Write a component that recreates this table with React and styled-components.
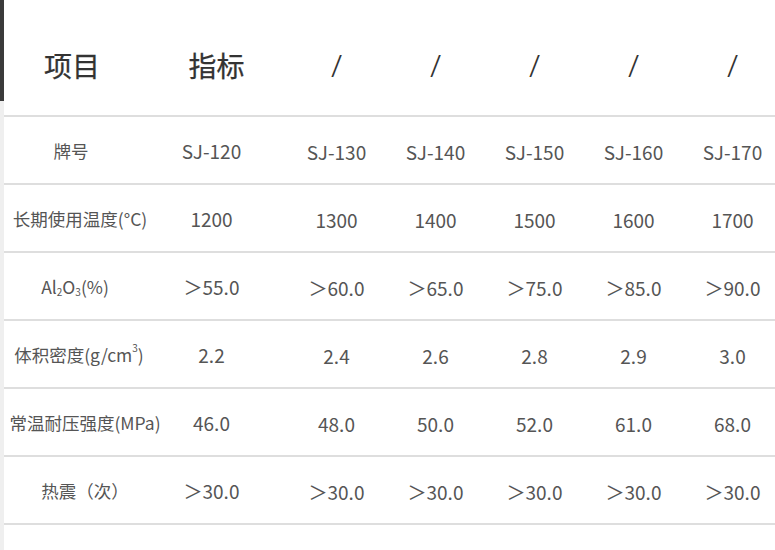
import React from 'react'
import styled, { createGlobalStyle } from 'styled-components'

const GlobalStyle = createGlobalStyle`
  html, body {
    margin: 0;
    padding: 0;
    background: #fff;
    overflow: hidden;
  }
  body {
    font-family: "Noto Sans CJK SC", "Noto Sans", sans-serif;
  }
`

const Frame = styled.div`
  display: flex;
  width: 775px;
  height: 550px;
  overflow: hidden;
`
const Rail = styled.div`
  flex: 0 0 4px;
  background: linear-gradient(#3a3a3a 0 101px, #efefef 101px);
`
const Table = styled.div`
  display: grid;
  grid-template-columns: 152px 131px repeat(5, 99px);
  grid-template-rows: 117px;
  grid-auto-rows: 68px;
  flex: 0 0 auto;
`
const Cell = styled.div`
  display: flex;
  align-items: center;
  justify-content: center;
  box-sizing: border-box;
  border-bottom: 2px solid #dedede;
  color: #555;
  font-size: ${p => (p.$label ? '17.5px' : '19px')};
  white-space: nowrap;
  padding-top: ${p => p.$top || 0}px;
  padding-left: ${p => Math.max(p.$shift || 0, 0) * 2}px;
  padding-right: ${p => Math.max(-(p.$shift || 0), 0) * 2}px;
`
const HeadCell = styled(Cell)`
  color: #333;
  font-size: 28px;
  font-weight: 400;
  -webkit-text-stroke: 0.25px #333;
  padding-top: 14px;
`
const Slash = styled.span`
  font-family: "Noto Sans", sans-serif;
  font-weight: 300;
  font-size: 32px;
  color: #333;
  -webkit-text-stroke: 0;
`
const Sub = styled.span`
  font-size: 10px;
  position: relative;
  top: ${p => (p.$up ? '-7px' : '5px')};
`

const head = ['项目', '指标', '/', '/', '/', '/', '/']
const headShift = [-8, -5, 0, 0, 0, 0, 0]

const rows = [
  { label: '牌号', shift: -9, values: ['SJ-120', 'SJ-130', 'SJ-140', 'SJ-150', 'SJ-160', 'SJ-170'] },
  { label: '长期使用温度(°C)', shift: 0, values: ['1200', '1300', '1400', '1500', '1600', '1700'] },
  {
    label: <>Al<Sub>2</Sub>O<Sub>3</Sub>(%)</>,
    shift: -5,
    values: ['＞55.0', '＞60.0', '＞65.0', '＞75.0', '＞85.0', '＞90.0'],
  },
  { label: <>体积密度(g/cm<Sub $up>3</Sub>)</>, shift: -1, values: ['2.2', '2.4', '2.6', '2.8', '2.9', '3.0'] },
  { label: '常温耐压强度(MPa)', shift: 5, values: ['46.0', '48.0', '50.0', '52.0', '61.0', '68.0'] },
  { label: '热震（次）', shift: 5, values: ['＞30.0', '＞30.0', '＞30.0', '＞30.0', '＞30.0', '＞30.0'] },
]

const App = () => (
  <Frame>
    <GlobalStyle />
    <Rail />
    <Table>
      {head.map((h, i) => (
        <HeadCell key={'h' + i} $shift={headShift[i]}>
          {h === '/' ? <Slash>/</Slash> : h}
        </HeadCell>
      ))}
      {rows.map((row, r) => (
        <React.Fragment key={r}>
          <Cell $label $shift={row.shift}>{row.label}</Cell>
          {row.values.map((v, i) => (
            <Cell key={i} $top={i === 0 ? 0 : 2} $shift={i === 0 ? -10 : 0}>{v}</Cell>
          ))}
        </React.Fragment>
      ))}
    </Table>
  </Frame>
)

export default App
